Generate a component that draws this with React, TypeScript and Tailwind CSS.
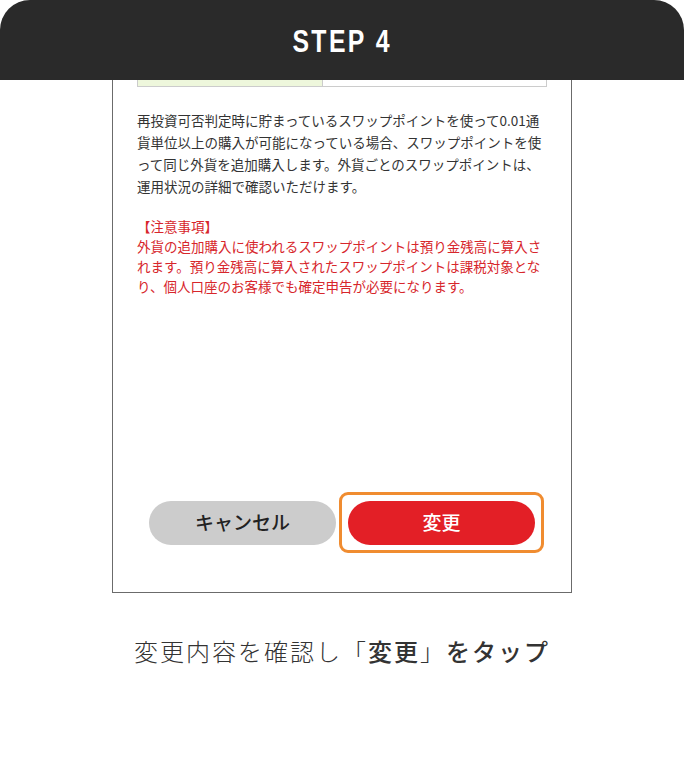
const jp = { fontFamily: '"Noto Sans CJK JP", "Noto Sans", sans-serif' }

export default function App() {
  return (
    <div className="w-[684px] h-[778px] bg-white" style={jp}>
      <div className="relative">
        {/* step header over the phone frame */}
        <div className="absolute top-0 left-0 w-[684px] h-[80px] bg-[#2a2a2a] rounded-t-[30px] flex items-center justify-center z-10">
          <p
            className="text-white text-[31px] font-bold tracking-[3px] leading-none pt-[2px] scale-x-[0.8]"
            style={{ fontFamily: '"Liberation Sans", Arial, sans-serif' }}
          >
            STEP 4
          </p>
        </div>

        <div className="pt-[56px] pl-[112px]">
          <div className="w-[460px] h-[537px] border border-[#6b6b6b] flex flex-col">
            <div className="mx-[24px] flex h-[30px] border border-[#cccccc]">
              <div className="w-[185px] bg-[#eef7dc] border-r border-[#cccccc]" />
              <div className="flex-1 bg-white" />
            </div>

            <div className="px-[24px] pt-[22px] text-[13.5px] whitespace-nowrap">
              <p className="text-[#333333] leading-[22px]">
                再投資可否判定時に貯まっているスワップポイントを使って0.01通<br />
                貨単位以上の購入が可能になっている場合、スワップポイントを使<br />
                って同じ外貨を追加購入します。外貨ごとのスワップポイントは、<br />
                運用状況の詳細で確認いただけます。
              </p>
              <p className="mt-[19px] text-[#d7262b] font-normal leading-[20px]">
                【注意事項】<br />
                外貨の追加購入に使われるスワップポイントは預り金残高に算入さ<br />
                れます。預り金残高に算入されたスワップポイントは課税対象とな<br />
                り、個人口座のお客様でも確定申告が必要になります。
              </p>
            </div>

            <div className="mt-auto mb-[39px] flex items-center pl-[36px] gap-[3px]">
              <button className="w-[187px] h-[44px] rounded-full bg-[#cccccc] text-[#222222] text-[19px] font-medium">
                キャンセル
              </button>
              <div className="w-[205px] h-[61px] rounded-[9px] border-[3px] border-[#f08c30] flex items-center justify-center">
                <button className="w-[187px] h-[44px] rounded-full bg-[#e31f26] text-white text-[19px] font-medium">
                  変更
                </button>
              </div>
            </div>
          </div>
        </div>
      </div>

      <p className="mt-[42px] text-center text-[24px] tracking-[2px] text-[#333333] font-light leading-[32px]">
        変更内容を確認し「<span className="font-medium">変更</span>」<span className="font-medium">をタップ</span>
      </p>
    </div>
  )
}
